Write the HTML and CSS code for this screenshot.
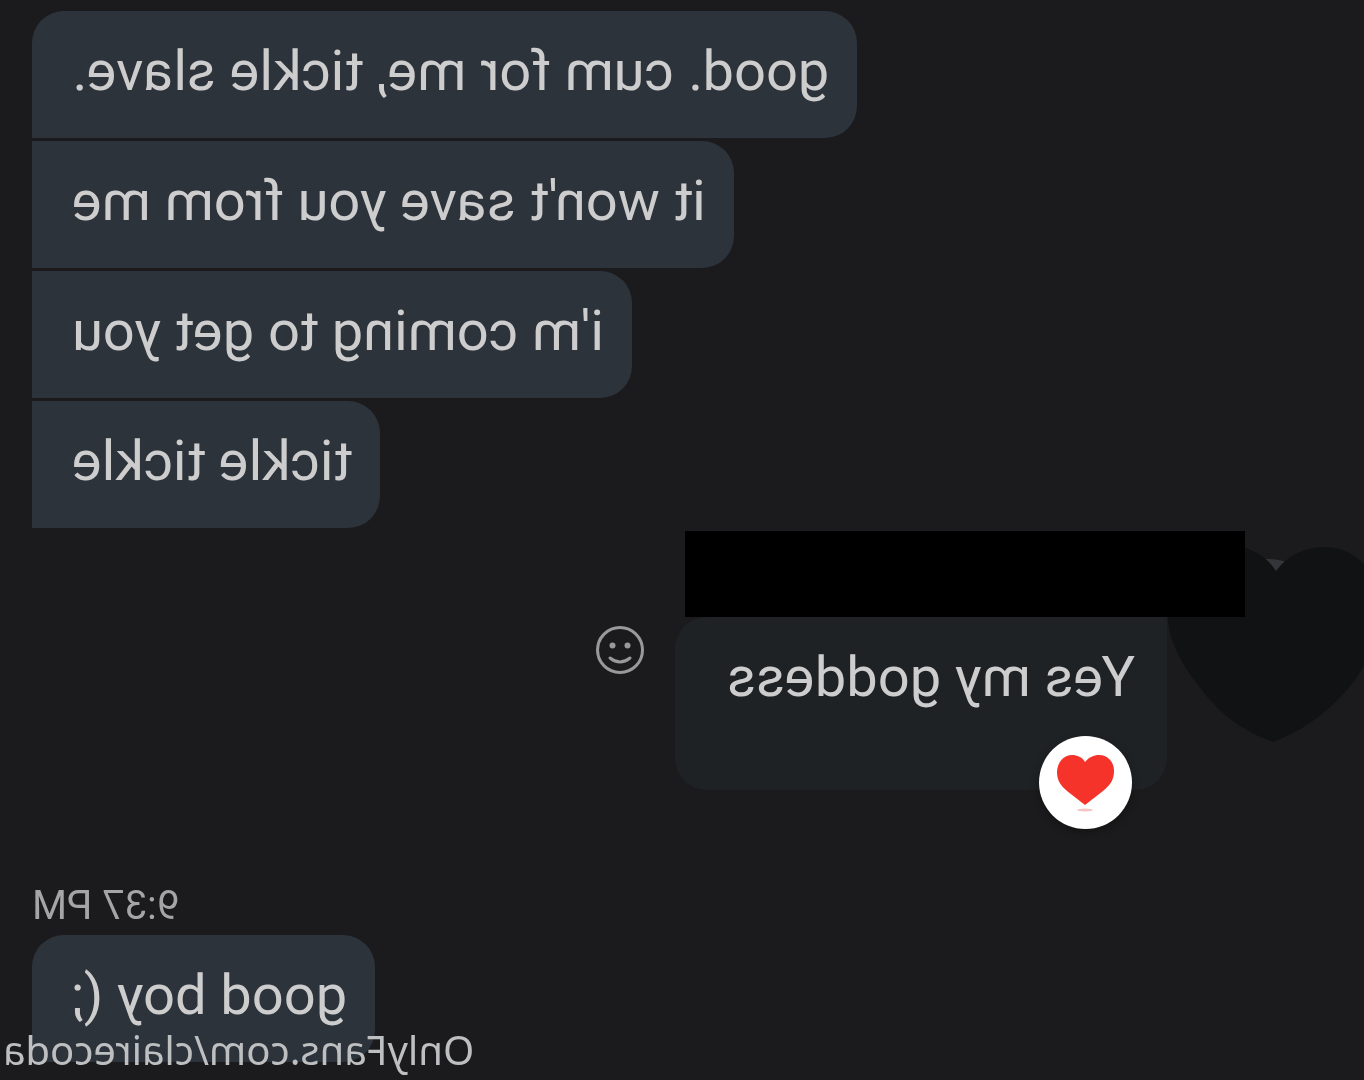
FILE: index.html
```
<!DOCTYPE html>
<html lang="en">
<head>
  <meta charset="UTF-8" />
  <meta name="viewport" content="width=device-width, initial-scale=1.0"/>
  <title>Chat</title>
  <link rel="stylesheet" href="styles.css">
</head>
<body>
  <main class="chat">
    <div class="sent">
      <p class="bubble first">good. cum for me, tickle slave.</p>
      <p class="bubble">it won't save you from me</p>
      <p class="bubble">i'm coming to get you</p>
      <p class="bubble">tickle tickle</p>
    </div>

    <div class="received">
      <svg class="avatar" viewBox="0 0 197 212" aria-hidden="true">
        <circle cx="97" cy="94" r="66" fill="#343538"/>
        <path fill="#111214" d="M88 40C77 24 58 16 40 16C8 16 -17 43 -17 78C-17 130 30 188 91 211C122 200 145 182 163 158C184 132 197 108 197 76C197 40 172 14 138 14C118 14 99 23 88 40Z"/>
      </svg>
      <div class="bubble reply">
        Yes my goddess
        <span class="reaction">
          <svg viewBox="0 0 93 93" aria-label="heart" role="img">
            <path fill="#f5332b" d="M47 26C43 21 38 19 33 19C24 19 18 26 18 35C18 44 22 49 29 55C35 60 41 64 47 69C53 64 59 60 65 55C72 49 75 44 75 36C75 26 68 19 60 19C55 19 50 21 47 26Z"/>
            <ellipse cx="47" cy="74" rx="8" ry="1.5" fill="#f4c4c4"/>
          </svg>
        </span>
      </div>
      <button class="react" aria-label="Add reaction">
        <svg viewBox="0 0 48 48" fill="none" stroke="#99999b" stroke-width="3" stroke-linecap="round">
          <circle cx="24" cy="24" r="22.5"/>
          <path d="M14 32Q24 40 34 32"/>
          <circle cx="16.500" cy="19.500" r="3" fill="#99999b" stroke="none"/>
          <circle cx="31.500" cy="19.500" r="3" fill="#99999b" stroke="none"/>
        </svg>
      </button>
      <div class="redacted"></div>
    </div>

    <div class="sent later">
      <time class="time">9:37 PM</time>
      <p class="bubble first">good boy (;</p>
    </div>

    <div class="watermark">OnlyFans.com/clairecoda</div>
  </main>
</body>
</html>
```
FILE: styles.css
```
body {
  margin: 0;
  background-color: #1b1b1d;
  font-family: Roboto, sans-serif;
  overflow: hidden;
}

/* the whole conversation is flipped left to right */
.chat {
  position: relative;
  box-sizing: border-box;
  min-height: 100vh;
  padding-top: 11px;
  transform: scaleX(-1);
}

.sent {
  display: flex;
  flex-direction: column;
  align-items: flex-end;
  gap: 3px;
  padding-right: 32px;
}

.bubble {
  margin: 0;
  padding: 27px 40px 33px 28px;
  background-color: #2d333b;
  color: #cdcdce;
  font-size: 56px;
  line-height: 67px;
  white-space: nowrap;
  border-radius: 32px 0 0 32px;
}

.bubble.first {
  border-top-right-radius: 32px;
}

.received {
  position: relative;
  display: flex;
  align-items: flex-start;
  margin-top: 3px;
}

.avatar {
  width: 197px;
  height: 212px;
  flex: none;
}

.bubble.reply {
  position: relative;
  margin-top: 86px;
  padding: 27px 52px 79px 32px;
  background-color: #1f2225;
  border-radius: 0 32px 32px 32px;
}

.reaction {
  position: absolute;
  left: 35px;
  bottom: -39px;
  width: 93px;
  height: 93px;
  border-radius: 50%;
  background-color: white;
  box-shadow: 0 3px 8px rgba(0, 0, 0, 0.3);
}

.reaction svg, .react svg {
  display: block;
}

.react {
  width: 48px;
  height: 48px;
  margin: 95px 0 0 31px;
  padding: 0;
  border: none;
  background: none;
  cursor: pointer;
}

.redacted {
  position: absolute;
  top: 0;
  left: 119px;
  width: 560px;
  height: 86px;
  background-color: black;
}

.later {
  gap: 5px;
  margin-top: 92px;
}

.time {
  color: #a5a5a6;
  font-size: 40px;
  line-height: 48px;
}

.watermark {
  position: absolute;
  right: 3px;
  bottom: 2px;
  color: #bebfc1;
  font-family: "Noto Sans", sans-serif;
  font-size: 40px;
  line-height: 56px;
}
```
